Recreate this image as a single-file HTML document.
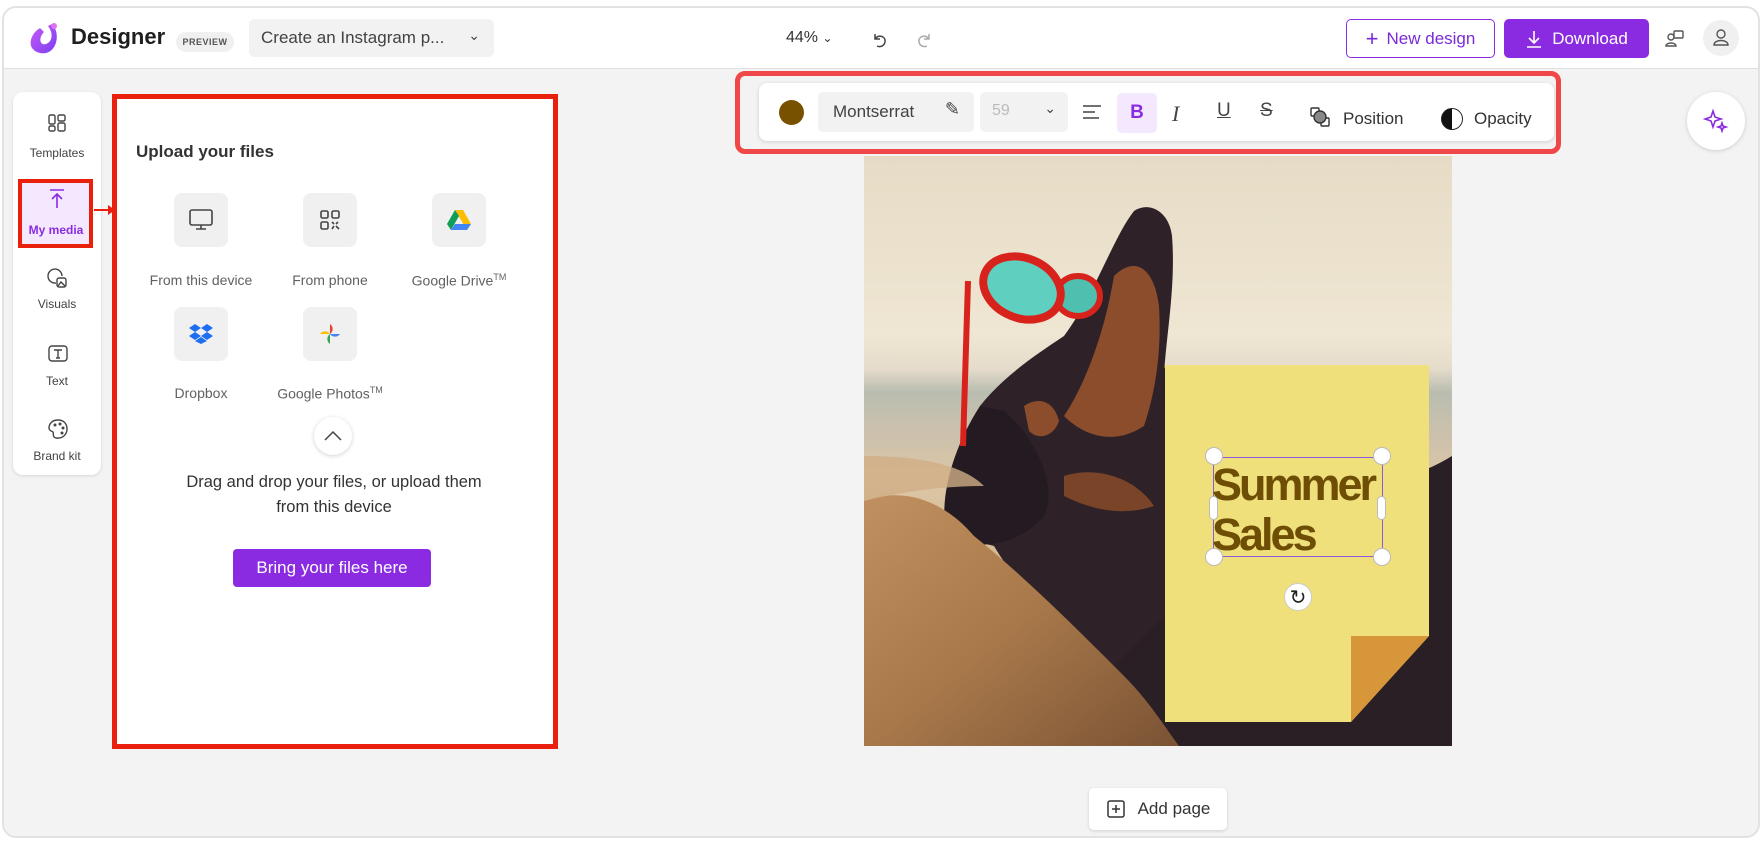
<!DOCTYPE html>
<html><head><meta charset="utf-8"><style>
*{box-sizing:border-box;margin:0;padding:0}
body{width:1762px;height:846px;overflow:hidden;background:#fff;font-family:"Liberation Sans",sans-serif;position:relative;color:#242424}
.abs{position:absolute}
.frame{left:2px;top:6px;width:1758px;height:832px;border:2px solid #e2e2e2;border-radius:14px;background:#f3f3f3;overflow:hidden}
.hdr{left:0;top:0;width:100%;height:61px;background:#fff;border-bottom:1px solid #e0e0e0}
.c{display:flex;align-items:center;justify-content:center}
.lbl{font-size:12px;color:#424242;text-align:center;width:88px}
.tile{width:54px;height:54px;background:#f0f0f0;border-radius:8px}
.tl{font-size:14px;color:#616161;text-align:center;width:150px}
</style></head><body>
<div class="abs frame">
 <div class="abs hdr">
  <svg class="abs" style="left:22px;top:12px" width="36" height="38" viewBox="0 0 36 38"><defs><linearGradient id="lg" x1="0" y1="0" x2="1" y2="1"><stop offset="0" stop-color="#c85af5"/><stop offset="1" stop-color="#7b3ff2"/></linearGradient></defs><path d="M8 30 C2 26 4 14 14 8 L18 12 C12 18 14 26 20 24 C26 22 28 14 22 6 L26 4 C34 12 32 30 20 33 C14 34 10 32 8 30Z" fill="url(#lg)"/><circle cx="28" cy="6" r="3" fill="#e070f0"/></svg>
  <div class="abs" style="left:67px;top:16px;font-size:22px;font-weight:bold;color:#1f1f1f">Designer</div>
  <div class="abs c" style="left:172px;top:24px;width:58px;height:20px;background:#f0f0f0;border-radius:10px;font-size:9px;font-weight:bold;color:#555;letter-spacing:.5px">PREVIEW</div>
  <div class="abs" style="left:245px;top:11px;width:245px;height:38px;background:#f2f2f2;border-radius:6px;font-size:17px;color:#424242;padding:9px 12px">Create an Instagram p...<span style="position:absolute;right:14px;top:8px;font-size:14px">&#8964;</span></div>
  <div class="abs" style="left:782px;top:21px;font-size:16px;color:#333">44% <span style="font-size:12px">&#8964;</span></div>
  <svg class="abs" style="left:866px;top:22px" width="20" height="20" viewBox="0 0 20 20" fill="none" stroke="#444" stroke-width="1.5"><path d="M5 4 L5 9 L10 9 M5 9 C8 4 16 6 15 12 C14 17 9 17 7 16"/></svg>
  <svg class="abs" style="left:910px;top:22px" width="20" height="20" viewBox="0 0 20 20" fill="none" stroke="#aaa" stroke-width="1.5"><path d="M15 4 L15 9 L10 9 M15 9 C12 4 4 6 5 12 C6 17 11 17 13 16"/></svg>
  <div class="abs c" style="left:1342px;top:11px;width:149px;height:39px;border:1.5px solid #8a2be2;border-radius:5px;color:#7a2bd6;font-size:17px"><span style="font-size:22px;margin-right:8px;font-weight:300">+</span>New design</div>
  <div class="abs c" style="left:1500px;top:11px;width:145px;height:39px;background:#8a2be2;border-radius:5px;color:#fff;font-size:17px"><svg width="18" height="20" viewBox="0 0 18 20" style="margin-right:9px" fill="none" stroke="#fff" stroke-width="1.6"><path d="M9 2 V14 M4 9 L9 14 L14 9 M2 18 H16"/></svg>Download</div>
  <svg class="abs" style="left:1660px;top:20px" width="22" height="22" viewBox="0 0 22 22" fill="none" stroke="#555" stroke-width="1.4"><rect x="10" y="3" width="9" height="7" rx="1"/><circle cx="7" cy="9" r="3"/><path d="M2 18 C2 14 12 14 12 18Z"/></svg>
  <div class="abs c" style="left:1699px;top:12px;width:36px;height:36px;border-radius:50%;background:#f0f0f0"><svg width="20" height="20" viewBox="0 0 20 20" fill="none" stroke="#555" stroke-width="1.4"><circle cx="10" cy="6" r="4"/><path d="M3 17 C3 11 17 11 17 17Z"/></svg></div>
 </div>
 <!-- rail -->
 <div class="abs" style="left:9px;top:84px;width:88px;height:383px;background:#fff;border-radius:10px;box-shadow:0 1px 3px rgba(0,0,0,.12)"></div>
 <svg class="abs" style="left:43px;top:105px" width="20" height="20" viewBox="0 0 20 20" fill="none" stroke="#444" stroke-width="1.4"><rect x="2" y="2" width="6" height="9" rx="1.5"/><rect x="11" y="2" width="7" height="6" rx="1.5"/><rect x="2" y="13" width="6" height="5" rx="1.5"/><rect x="11" y="10" width="7" height="8" rx="1.5"/></svg>
 <div class="abs lbl" style="left:9px;top:138px">Templates</div>
 <div class="abs" style="left:14px;top:171px;width:75px;height:69px;background:#f4e8ff;border:4px solid #e8200c"></div>
 <svg class="abs" style="left:43px;top:180px" width="20" height="22" viewBox="0 0 20 22" fill="none" stroke="#8a2be2" stroke-width="1.6"><path d="M3 2 H17 M10 20 V6 M5 11 L10 6 L15 11"/></svg>
 <div class="abs lbl" style="left:8px;top:215px;color:#8a2be2;font-weight:bold">My media</div>
 <div class="abs" style="left:90px;top:201px;width:16px;height:2px;background:#e8200c"></div>
 <div class="abs" style="left:104px;top:197px;border-left:7px solid #e8200c;border-top:5px solid transparent;border-bottom:5px solid transparent"></div>
 <svg class="abs" style="left:43px;top:260px" width="22" height="22" viewBox="0 0 22 22" fill="none" stroke="#444" stroke-width="1.4"><path d="M9 15 A7 7 0 1 1 15 8"/><rect x="10" y="10" width="9" height="9" rx="2"/><path d="M11 18 L14 14 L18 18"/></svg>
 <div class="abs lbl" style="left:9px;top:289px">Visuals</div>
 <svg class="abs" style="left:43px;top:336px" width="22" height="20" viewBox="0 0 22 20" fill="none" stroke="#444" stroke-width="1.4"><rect x="2" y="2" width="18" height="15" rx="3"/><path d="M7 6 H15 M11 6 V14 M9 14 H13"/></svg>
 <div class="abs lbl" style="left:9px;top:366px">Text</div>
 <svg class="abs" style="left:43px;top:410px" width="22" height="22" viewBox="0 0 22 22" fill="none" stroke="#444" stroke-width="1.4"><path d="M11 2 C5 2 2 6 2 10 C2 13 5 13 6 14 C7 16 5 19 9 20 C16 21 20 16 20 11 C20 5 16 2 11 2Z"/><circle cx="8" cy="7" r=".8" fill="#444"/><circle cx="13" cy="6" r=".8" fill="#444"/><circle cx="16" cy="10" r=".8" fill="#444"/><circle cx="15" cy="15" r=".8" fill="#444"/></svg>
 <div class="abs lbl" style="left:9px;top:441px">Brand kit</div>
 <!-- panel -->
 <div class="abs" style="left:108px;top:86px;width:446px;height:655px;background:#fff;border:5px solid #e8200c"></div>
 <div class="abs" style="left:132px;top:134px;font-size:17px;font-weight:bold;color:#333">Upload your files</div>
 <div class="abs tile c" style="left:170px;top:185px"><svg width="26" height="24" viewBox="0 0 26 24" fill="none" stroke="#444" stroke-width="1.6"><rect x="2" y="2" width="22" height="15" rx="2"/><path d="M13 17 V21 M8 21 H18"/></svg></div>
 <div class="abs tile c" style="left:299px;top:185px"><svg width="22" height="22" viewBox="0 0 22 22" fill="none" stroke="#444" stroke-width="1.6"><rect x="2" y="2" width="7" height="7" rx="1.5"/><rect x="13" y="2" width="7" height="7" rx="1.5"/><rect x="2" y="13" width="7" height="7" rx="1.5"/><path d="M13 13 L15 15 M19 13 L17 15 M15 17 L13 20 M17 17 L20 20"/></svg></div>
 <div class="abs tile c" style="left:428px;top:185px"><svg width="24" height="22" viewBox="0 0 24 22"><path d="M8 1 H16 L24 15 L20 21Z" fill="#fbbc04"/><path d="M8 1 L0 15 L4 21 L12 7Z" fill="#0f9d58"/><path d="M4 21 H20 L24 15 H8Z" fill="#4285f4"/></svg></div>
 <div class="abs tl" style="left:122px;top:264px">From this device</div>
 <div class="abs tl" style="left:251px;top:264px">From phone</div>
 <div class="abs tl" style="left:380px;top:264px">Google Drive<sup style="font-size:9px">TM</sup></div>
 <div class="abs tile c" style="left:170px;top:299px"><svg width="24" height="22" viewBox="0 0 24 22" fill="#1e6ff0"><path d="M6 1 L12 5 L6 9 L0 5Z M18 1 L24 5 L18 9 L12 5Z M6 9 L12 13 L6 17 L0 13Z M18 9 L24 13 L18 17 L12 13Z M12 14 L18 18 L12 21 L6 18Z"/></svg></div>
 <div class="abs tile c" style="left:299px;top:299px"><svg width="24" height="24" viewBox="0 0 24 24"><path d="M12 12 V2 A6 6 0 0 1 12 12Z" fill="#ea4335"/><path d="M12 12 H22 A6 6 0 0 1 12 12Z" fill="#4285f4"/><path d="M12 12 V22 A6 6 0 0 1 12 12Z" fill="#34a853"/><path d="M12 12 H2 A6 6 0 0 1 12 12Z" fill="#fbbc04"/></svg></div>
 <div class="abs tl" style="left:122px;top:377px">Dropbox</div>
 <div class="abs tl" style="left:251px;top:377px">Google Photos<sup style="font-size:9px">TM</sup></div>
 <div class="abs c" style="left:310px;top:409px;width:38px;height:38px;border-radius:50%;background:#fff;box-shadow:0 1px 5px rgba(0,0,0,.18)"><svg width="20" height="12" viewBox="0 0 20 12" fill="none" stroke="#444" stroke-width="1.5"><path d="M2 10 L10 2 L18 10"/></svg></div>
 <div class="abs" style="left:130px;top:462px;width:400px;text-align:center;font-size:16.5px;line-height:25px;color:#333">Drag and drop your files, or upload them<br>from this device</div>
 <div class="abs c" style="left:229px;top:541px;width:198px;height:38px;background:#8a2be2;border-radius:4px;color:#fff;font-size:17px">Bring your files here</div>
 <!-- toolbar -->
 <div class="abs" style="left:731px;top:63px;width:826px;height:83px;border:5px solid #f04848;border-radius:10px"></div>
 <div class="abs" style="left:755px;top:75px;width:795px;height:58px;background:#fff;border-radius:8px;box-shadow:0 1px 4px rgba(0,0,0,.15)"></div>
 <div class="abs" style="left:775px;top:92px;width:25px;height:25px;border-radius:50%;background:#775100"></div>
 <div class="abs" style="left:814px;top:84px;width:156px;height:40px;background:#f2f2f2;border-radius:5px;font-size:17px;color:#424242;padding:10px 15px">Montserrat <span style="position:absolute;right:14px;top:7px;font-size:18px">&#9998;</span></div>
 <div class="abs" style="left:976px;top:84px;width:88px;height:40px;background:#f2f2f2;border-radius:5px;font-size:16px;color:#bbb;padding:10px 12px">59<span style="position:absolute;right:12px;top:8px;color:#444;font-size:14px">&#8964;</span></div>
 <svg class="abs" style="left:1077px;top:94px" width="22" height="20" viewBox="0 0 22 20" stroke="#444" stroke-width="1.6"><path d="M2 4 H20 M2 10 H14 M2 16 H18"/></svg>
 <div class="abs c" style="left:1113px;top:85px;width:40px;height:40px;background:#f4e8ff;border-radius:5px;color:#8a2be2;font-weight:bold;font-size:19px">B</div>
 <div class="abs" style="left:1168px;top:93px;font-family:'Liberation Serif',serif;font-style:italic;font-size:22px;color:#444">I</div>
 <div class="abs" style="left:1213px;top:92px;font-size:19px;color:#444;text-decoration:underline">U</div>
 <div class="abs" style="left:1256px;top:92px;font-size:19px;color:#444;text-decoration:line-through">S</div>
 <svg class="abs" style="left:1305px;top:98px" width="22" height="22" viewBox="0 0 22 22" fill="none" stroke="#333" stroke-width="1.4"><rect x="2" y="2" width="8" height="8" rx="1"/><rect x="12" y="12" width="8" height="8" rx="1"/><circle cx="11" cy="11" r="6" fill="#888"/></svg>
 <div class="abs" style="left:1339px;top:101px;font-size:17px;color:#333">Position</div>
 <div class="abs" style="left:1437px;top:100px;width:22px;height:22px;border-radius:50%;border:1.5px solid #222;background:linear-gradient(90deg,#111 50%,#fff 50%)"></div>
 <div class="abs" style="left:1470px;top:101px;font-size:17px;color:#333">Opacity</div>
 <div class="abs c" style="left:1683px;top:84px;width:58px;height:58px;border-radius:50%;background:#fff;box-shadow:0 1px 5px rgba(0,0,0,.15)"><svg width="26" height="26" viewBox="0 0 26 26" fill="none" stroke="#8a2be2" stroke-width="1.6"><path d="M10 3 L12 9 L18 11 L12 13 L10 19 L8 13 L2 11 L8 9Z"/><path d="M19 15 L20 18 L23 19 L20 20 L19 23 L18 20 L15 19 L18 18Z"/></svg></div>
 <!-- photo -->
 <svg class="abs" style="left:860px;top:148px" width="588" height="590" viewBox="0 0 588 590">
  <defs>
   <linearGradient id="sky" x1="0" y1="0" x2="0" y2="1"><stop offset="0" stop-color="#e6dcc6"/><stop offset=".3" stop-color="#efe6d3"/><stop offset=".36" stop-color="#e6dccb"/><stop offset=".40" stop-color="#b9bdb0"/><stop offset=".46" stop-color="#c9c0ad"/><stop offset=".55" stop-color="#dcc6a5"/><stop offset="1" stop-color="#c49a6c"/></linearGradient>
   <linearGradient id="sand" x1="0" y1="0" x2="1" y2="1"><stop offset="0" stop-color="#c19060"/><stop offset=".5" stop-color="#a8784a"/><stop offset="1" stop-color="#7a5334"/></linearGradient>
  </defs>
  <rect width="588" height="590" fill="url(#sky)"/>
  <!-- body -->
  <path d="M300 210 C330 280 360 300 400 320 C470 340 540 330 588 300 V590 H220 Z" fill="#2b1f26"/>
  <!-- head and neck -->
  <path d="M270 55 C285 45 305 55 308 80 C312 130 302 180 300 220 C300 300 305 380 300 460 L240 520 C200 480 160 440 130 390 C110 385 88 380 80 370 C85 330 100 300 116 250 C140 220 170 200 200 180 C230 140 250 80 270 55Z" fill="#2e2127"/>
  <!-- tan throat/cheek -->
  <path d="M250 120 C270 100 290 110 295 150 C298 200 290 240 280 270 C250 290 220 280 200 260 C220 230 240 180 250 120Z" fill="#8b4d2b"/>
  <path d="M160 250 C175 240 190 245 195 265 C190 280 175 285 165 275Z" fill="#8b4d2b"/>
  <path d="M200 320 C230 310 270 320 290 350 C260 360 230 355 200 340Z" fill="#7a4428"/>
  <!-- ear -->
  <path d="M116 250 C90 290 75 340 82 375 C100 395 150 395 180 360 C195 330 170 280 140 255Z" fill="#231a22"/>
  <!-- sand -->
  <path d="M0 345 C40 330 80 345 110 380 C160 420 210 470 260 520 C285 545 300 570 315 590 H0Z" fill="url(#sand)"/>
  <path d="M0 300 C60 300 100 310 120 330 C80 330 40 335 0 345Z" fill="#cfae86" opacity=".8"/>
  <!-- glasses -->
  <path d="M104 125 L99 290" stroke="#d8231d" stroke-width="6"/>
  <ellipse cx="214" cy="140" rx="22" ry="20" fill="#4fbfb0" stroke="#d8231d" stroke-width="6"/>
  <ellipse cx="158" cy="132" rx="40" ry="30" transform="rotate(22 158 132)" fill="#5fd0c0" stroke="#d8231d" stroke-width="8"/>
 </svg>
 <!-- note -->
 <svg class="abs" style="left:1161px;top:357px" width="264" height="357" viewBox="0 0 264 357"><path d="M0 0 H264 V271 L186 357 H0Z" fill="#efe07c"/><path d="M186 271 H264 L186 357Z" fill="#d8963a"/></svg>
 <div class="abs" style="left:1209px;top:449px;width:170px;height:100px;border:1.5px solid #8a5ae0"></div>
 <div class="abs" style="left:1208px;top:452px;font-size:45px;font-weight:bold;color:#6e4d05;line-height:50px;letter-spacing:-3px">Summer<br>Sales</div>
 <div class="abs" style="left:1201px;top:439px;width:18px;height:18px;border-radius:50%;background:#fff;border:1px solid #bbb"></div>
 <div class="abs" style="left:1369px;top:439px;width:18px;height:18px;border-radius:50%;background:#fff;border:1px solid #bbb"></div>
 <div class="abs" style="left:1201px;top:540px;width:18px;height:18px;border-radius:50%;background:#fff;border:1px solid #bbb"></div>
 <div class="abs" style="left:1369px;top:540px;width:18px;height:18px;border-radius:50%;background:#fff;border:1px solid #bbb"></div>
 <div class="abs" style="left:1205px;top:488px;width:9px;height:24px;border-radius:5px;background:#fff;border:1px solid #bbb"></div>
 <div class="abs" style="left:1373px;top:488px;width:9px;height:24px;border-radius:5px;background:#fff;border:1px solid #bbb"></div>
 <div class="abs c" style="left:1280px;top:575px;width:28px;height:28px;border-radius:50%;background:#fff;border:1px solid #ccc;font-size:20px;color:#222">&#8635;</div>
 <div class="abs c" style="left:1085px;top:780px;width:138px;height:42px;background:#fff;border-radius:5px;box-shadow:0 1px 3px rgba(0,0,0,.15);font-size:17px;color:#333"><svg width="20" height="20" viewBox="0 0 20 20" fill="none" stroke="#333" stroke-width="1.5" style="margin-right:12px"><rect x="2" y="2" width="16" height="16" rx="2"/><path d="M10 6 V14 M6 10 H14"/></svg>Add page</div>
</div>
</body></html>
